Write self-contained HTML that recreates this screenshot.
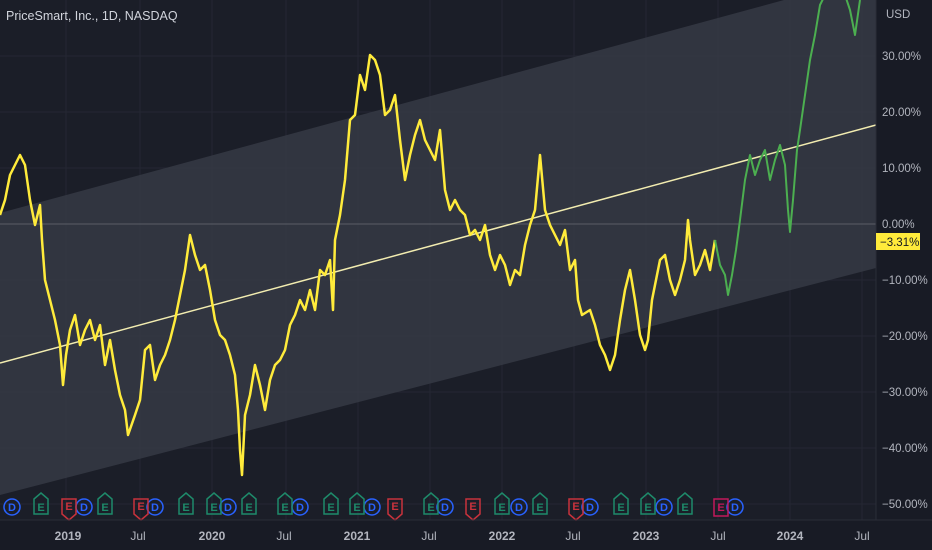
<!DOCTYPE html>
<html><head><meta charset="utf-8"><style>
body{margin:0;background:#171a24;}
svg{display:block;font-family:"Liberation Sans",sans-serif;}
</style></head><body>
<svg width="932" height="550" viewBox="0 0 932 550">
<rect width="932" height="550" fill="#181b25"/>
<rect width="876" height="520" fill="#1b1e28"/>
<g stroke="#242733" stroke-width="1">
<line x1="66" y1="0" x2="66" y2="520"/><line x1="140" y1="0" x2="140" y2="520"/><line x1="212" y1="0" x2="212" y2="520"/><line x1="286" y1="0" x2="286" y2="520"/><line x1="358" y1="0" x2="358" y2="520"/><line x1="430" y1="0" x2="430" y2="520"/><line x1="502" y1="0" x2="502" y2="520"/><line x1="574" y1="0" x2="574" y2="520"/><line x1="646" y1="0" x2="646" y2="520"/><line x1="718" y1="0" x2="718" y2="520"/><line x1="790" y1="0" x2="790" y2="520"/><line x1="862" y1="0" x2="862" y2="520"/>
<line x1="0" y1="56" x2="876" y2="56"/><line x1="0" y1="112" x2="876" y2="112"/><line x1="0" y1="168" x2="876" y2="168"/><line x1="0" y1="280" x2="876" y2="280"/><line x1="0" y1="336" x2="876" y2="336"/><line x1="0" y1="392" x2="876" y2="392"/><line x1="0" y1="448" x2="876" y2="448"/><line x1="0" y1="504" x2="876" y2="504"/>
</g>
<polygon points="0,213 876,-25 876,268 0,495" fill="#3a3d48" fill-opacity="0.75"/>
<line x1="0" y1="224" x2="876" y2="224" stroke="#5a5d66" stroke-width="1"/>
<line x1="0" y1="363" x2="876" y2="125" stroke="#f2ecb0" stroke-width="1.5"/>
<polyline fill="none" stroke="#ffeb3b" stroke-width="2.5" stroke-linejoin="round" points="0,215 5,200 10,175 15,165 20,155 25,165 30,200 35,225 40,205 42,240 45,280 50,300 55,320 60,345 63,385 66,355 70,330 75,315 80,345 85,330 90,320 95,340 100,325 105,365 110,340 115,370 120,395 125,410 128,435 135,415 140,400 145,350 150,345 155,380 160,365 165,355 170,340 175,320 180,295 185,270 190,235 195,255 200,270 205,265 210,290 215,320 220,335 225,340 230,355 235,375 238,410 240,450 242,475 245,415 250,395 255,365 260,385 265,410 270,380 275,365 280,360 285,350 290,325 295,315 300,300 305,310 310,290 315,310 320,270 325,275 330,260 333,310 335,240 340,215 345,180 350,120 355,115 360,75 365,90 370,55 375,60 380,75 385,115 390,110 395,95 400,140 405,180 410,155 415,135 420,120 425,140 430,150 435,160 440,130 445,190 450,210 455,200 460,210 465,215 470,235 475,230 480,240 485,225 490,255 495,270 500,255 505,265 510,285 515,270 520,275 525,245 530,225 535,210 540,155 545,210 550,225 555,235 560,245 565,230 570,270 575,260 578,300 582,315 590,310 595,325 600,345 605,355 610,370 615,355 620,320 625,290 630,270 635,300 640,335 645,350 648,340 652,300 655,285 660,260 665,255 670,280 675,295 680,280 685,260 688,220 690,240 695,275 700,265 705,250 710,270 715,240"/>
<polyline fill="none" stroke="#4caf50" stroke-width="2" stroke-linejoin="round" points="715,240 720,265 725,275 728,295 732,275 736,250 740,220 745,180 750,155 755,175 760,160 765,150 770,180 775,160 780,145 785,165 788,210 790,232 793,200 797,150 800,130 805,95 810,60 815,35 820,5 825,-5 845,-5 850,10 855,35 860,0"/>
<g font-size="11" font-weight="bold" text-anchor="middle">
<g fill="none" stroke-width="1.5">
<g stroke="#2962ff"><circle cx="12" cy="507" r="8"/><circle cx="84" cy="507" r="8"/><circle cx="155" cy="507" r="8"/><circle cx="228" cy="507" r="8"/><circle cx="300" cy="507" r="8"/><circle cx="372" cy="507" r="8"/><circle cx="445" cy="507" r="8"/><circle cx="519" cy="507" r="8"/><circle cx="590" cy="507" r="8"/><circle cx="664" cy="507" r="8"/><circle cx="735" cy="507" r="8"/></g>
<g stroke="#1e8a6a">
<path d="M34,499 l7,-6 l7,6 v15 h-14z"/><path d="M98,499 l7,-6 l7,6 v15 h-14z"/><path d="M179,499 l7,-6 l7,6 v15 h-14z"/><path d="M207,499 l7,-6 l7,6 v15 h-14z"/><path d="M242,499 l7,-6 l7,6 v15 h-14z"/><path d="M278,499 l7,-6 l7,6 v15 h-14z"/><path d="M324,499 l7,-6 l7,6 v15 h-14z"/><path d="M350,499 l7,-6 l7,6 v15 h-14z"/><path d="M424,499 l7,-6 l7,6 v15 h-14z"/><path d="M495,499 l7,-6 l7,6 v15 h-14z"/><path d="M533,499 l7,-6 l7,6 v15 h-14z"/><path d="M614,499 l7,-6 l7,6 v15 h-14z"/><path d="M641,499 l7,-6 l7,6 v15 h-14z"/><path d="M678,499 l7,-6 l7,6 v15 h-14z"/></g>
<g stroke="#c8323c">
<path d="M62,499 h14 v15 l-7,6 l-7,-6z"/><path d="M134,499 h14 v15 l-7,6 l-7,-6z"/><path d="M388,499 h14 v15 l-7,6 l-7,-6z"/><path d="M466,499 h14 v15 l-7,6 l-7,-6z"/><path d="M569,499 h14 v15 l-7,6 l-7,-6z"/></g>
<rect x="714" y="499" width="14" height="17" stroke="#c2185b"/>
</g>
<g fill="#2962ff"><text x="12" y="511">D</text><text x="84" y="511">D</text><text x="155" y="511">D</text><text x="228" y="511">D</text><text x="300" y="511">D</text><text x="372" y="511">D</text><text x="445" y="511">D</text><text x="519" y="511">D</text><text x="590" y="511">D</text><text x="664" y="511">D</text><text x="735" y="511">D</text></g>
<g fill="#1e8a6a"><text x="41" y="511">E</text><text x="105" y="511">E</text><text x="186" y="511">E</text><text x="214" y="511">E</text><text x="249" y="511">E</text><text x="285" y="511">E</text><text x="331" y="511">E</text><text x="357" y="511">E</text><text x="431" y="511">E</text><text x="502" y="511">E</text><text x="540" y="511">E</text><text x="621" y="511">E</text><text x="648" y="511">E</text><text x="685" y="511">E</text></g>
<g fill="#c8323c"><text x="69" y="510">E</text><text x="141" y="510">E</text><text x="395" y="510">E</text><text x="473" y="510">E</text><text x="576" y="510">E</text></g>
<text x="721" y="511" fill="#c2185b">E</text>
</g>
<line x1="0" y1="520" x2="932" y2="520" stroke="#2a2d38"/>
<line x1="876" y1="0" x2="876" y2="520" stroke="#2a2d38"/>
<g fill="#b2b5be" font-size="12" text-anchor="middle">
<text x="68" y="540" font-weight="bold">2019</text><text x="138" y="540">Jul</text><text x="212" y="540" font-weight="bold">2020</text><text x="284" y="540">Jul</text><text x="357" y="540" font-weight="bold">2021</text><text x="429" y="540">Jul</text><text x="502" y="540" font-weight="bold">2022</text><text x="573" y="540">Jul</text><text x="646" y="540" font-weight="bold">2023</text><text x="718" y="540">Jul</text><text x="790" y="540" font-weight="bold">2024</text><text x="862" y="540">Jul</text>
</g>
<g fill="#b2b5be" font-size="11.5">
<text x="886" y="18">USD</text>
<text x="882" y="60">30.00%</text><text x="882" y="116">20.00%</text><text x="882" y="172">10.00%</text><text x="882" y="228">0.00%</text><text x="882" y="284">−10.00%</text><text x="882" y="340">−20.00%</text><text x="882" y="396">−30.00%</text><text x="882" y="452">−40.00%</text><text x="882" y="508">−50.00%</text>
</g>
<rect x="876" y="233" width="44" height="17" fill="#ffeb3b"/>
<text x="880" y="246" font-size="11.5" fill="#131722">−3.31%</text>
<text x="6" y="20" font-size="12.5" fill="#d1d4dc">PriceSmart, Inc., 1D, NASDAQ</text>
</svg>
</body></html>
